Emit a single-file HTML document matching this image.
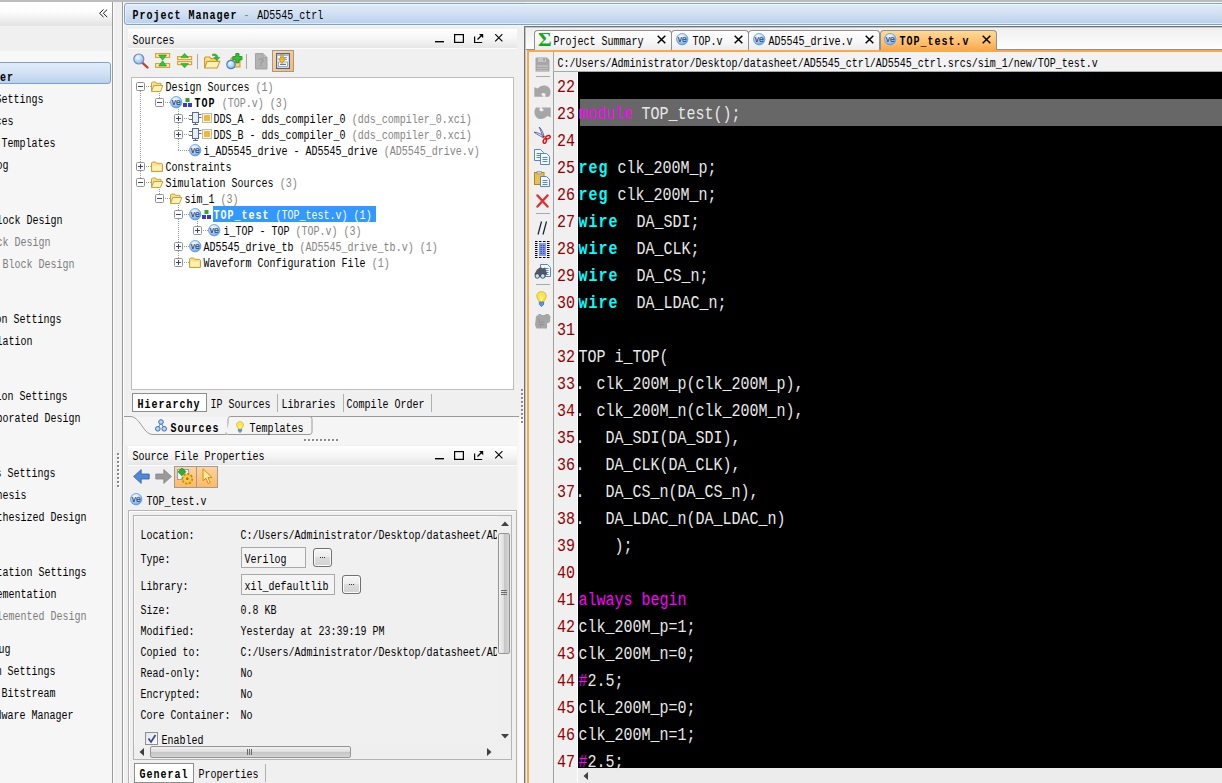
<!DOCTYPE html>
<html><head><meta charset="utf-8"><title>Project Manager - AD5545_ctrl</title>
<style>
html,body{margin:0;padding:0;background:#f0f0f0;}
#r{position:relative;width:1222px;height:783px;overflow:hidden;background:#f0f0f0;font-family:"Liberation Mono",monospace;}
.a{position:absolute;box-sizing:border-box;}
.t{position:absolute;font:10px/12px "Liberation Mono",monospace;white-space:pre;color:#000;transform:scaleY(1.2);transform-origin:0 0;height:10px;line-height:10px;}
.b,.t.b{font-weight:bold;letter-spacing:1px;}
.g{color:#858585;}
.c{position:absolute;left:578.5px;font:15px/15px "Liberation Mono",monospace;white-space:pre;color:#e9e9e9;transform:scaleY(1.2);transform-origin:0 0;height:15px;}
.n{position:absolute;left:557px;font:15px/15px "Liberation Mono",monospace;white-space:pre;color:#960000;transform:scaleY(1.2);transform-origin:0 0;height:15px;}
.k{color:#ff00ff;}
.y{color:#00ffff;font-weight:bold;letter-spacing:1px;}
</style></head><body><div id="r">
<div class="a" style="left:0px;top:0px;width:1222px;height:2px;background:#bcbcbc;"></div>
<div class="a" style="left:0px;top:2px;width:1222px;height:1px;background:#fafafa;"></div>
<div class="a" style="left:0px;top:2px;width:113px;height:781px;background:#f6f6f6;border-right:1px solid #9a9a9a;"></div>
<div class="a" style="left:0px;top:2px;width:112px;height:24px;background:linear-gradient(#ffffff,#fdfdfd 40%,#e2e2e2);"></div>
<div class="a" style="left:0px;top:26px;width:112px;height:25px;background:#f0f0f0;"></div>
<div class="a" style="left:0px;top:51px;width:112px;height:11px;background:#f8f8f8;"></div>
<svg class="a" style="left:99px;top:9px" width="9" height="9" viewBox="0 0 9 9"><path d="M4.500 0.500L0.600 4.300l3.900 3.800M8.200 0.500L4.300 4.300l3.900 3.800" stroke="#1a1a1a" stroke-width="1" fill="none"/></svg>
<div class="a" style="left:-4px;top:62px;width:115px;height:22px;border:1px solid #7da2ce;border-radius:3px;background:linear-gradient(#e1ecf9,#d2e1f4 50%,#b9d1ed);"></div>
<div class="t b" style="right:1207.9px;top:72.6px;">Project Manager</div>
<div class="t" style="right:1178.4px;top:94.6px;">Project Settings</div>
<div class="t" style="right:1208.4px;top:116.6px;">Add Sources</div>
<div class="t" style="right:1166.4px;top:138.6px;">Language Templates</div>
<div class="t" style="right:1213.4px;top:160.6px;">IP Catalog</div>
<div class="t" style="right:1159.4px;top:215.6px;">Create Block Design</div>
<div class="t" style="right:1171.4px;top:237.6px;color:#7c7c7c;">Open Block Design</div>
<div class="t" style="right:1147.4px;top:259.6px;color:#7c7c7c;">Generate Block Design</div>
<div class="t" style="right:1160.4px;top:314.6px;">Simulation Settings</div>
<div class="t" style="right:1189.4px;top:336.6px;">Run Simulation</div>
<div class="t" style="right:1154.4px;top:391.6px;">Elaboration Settings</div>
<div class="t" style="right:1141.4px;top:413.6px;">Open Elaborated Design</div>
<div class="t" style="right:1166.4px;top:468.6px;">Synthesis Settings</div>
<div class="t" style="right:1195.4px;top:490.6px;">Run Synthesis</div>
<div class="t" style="right:1135.4px;top:512.6px;">Open Synthesized Design</div>
<div class="t" style="right:1135.4px;top:567.6px;">Implementation Settings</div>
<div class="t" style="right:1165.4px;top:589.6px;">Run Implementation</div>
<div class="t" style="right:1135.4px;top:611.6px;color:#7c7c7c;">Open Implemented Design</div>
<div class="t" style="right:1211.4px;top:644.6px;">Program and Debug</div>
<div class="t" style="right:1166.4px;top:666.6px;">Bitstream Settings</div>
<div class="t" style="right:1166.4px;top:688.6px;">Generate Bitstream</div>
<div class="t" style="right:1148.4px;top:710.6px;">Open Hardware Manager</div>
<div class="a" style="left:113px;top:2px;width:9px;height:781px;background:#f0f0f0;border-left:1px solid #fff;"></div>
<div class="a" style="left:122px;top:2px;width:1px;height:781px;background:#9a9a9a;"></div>
<div class="a" style="left:123px;top:2px;width:402px;height:781px;background:#f0f0f0;border-left:1px solid #fff;"></div>
<div class="a" style="left:124px;top:3px;width:1110px;height:22px;border:1px solid #7da2ce;border-radius:3px;background:linear-gradient(#e1ebf8,#d0e0f3 50%,#b9d0ec);box-shadow:0 1px 0 #f6f9fc,inset 0 0 0 1px rgba(255,255,255,0.55);"></div>
<div class="t" style="left:132.6px;top:10.6px;"><span class="b">Project Manager</span><span class="g"> - </span><span style="margin-left:1.5px">AD5545_ctrl</span></div>
<div class="a" style="left:128px;top:29px;width:389px;height:20px;background:linear-gradient(#ffffff,#f6f6f6 50%,#e6e6e6);border-bottom:1px solid #fcfcfc;"></div>
<div class="t" style="left:132.6px;top:35.6px;">Sources</div>
<svg class="a" style="left:435px;top:34px" width="70" height="10" viewBox="0 0 70 10"><path d="M0 7.700h9" stroke="#000" stroke-width="1.400" fill="none"/><rect x="19.600" y="0.600" width="8.800" height="7.800" stroke="#000" stroke-width="1.200" fill="none"/><path d="M39.600 2.500v6h7.600" stroke="#000" stroke-width="1.200" fill="none"/><path d="M42.500 5.500L46.500 1.500" stroke="#000" stroke-width="1.200"/><path d="M43.800 -0.200h4.400v4.400z" fill="#000"/><path d="M60.200 0.200l7.200 7.200M67.400 0.200l-7.200 7.200" stroke="#000" stroke-width="1.150" fill="none"/></svg>
<div class="a" style="left:131px;top:77px;width:383px;height:313px;background:#fff;border:1px solid #bdbdbd;"></div>
<div class="a" style="left:140px;top:91px;width:1px;height:91px;background-image:linear-gradient(#9a9a9a 50%,transparent 50%);background-size:1px 2px;"></div>
<div class="a" style="left:159px;top:91px;width:1px;height:7px;background-image:linear-gradient(#9a9a9a 50%,transparent 50%);background-size:1px 2px;"></div>
<div class="a" style="left:178px;top:107px;width:1px;height:43px;background-image:linear-gradient(#9a9a9a 50%,transparent 50%);background-size:1px 2px;"></div>
<div class="a" style="left:159px;top:187px;width:1px;height:7px;background-image:linear-gradient(#9a9a9a 50%,transparent 50%);background-size:1px 2px;"></div>
<div class="a" style="left:178px;top:203px;width:1px;height:59px;background-image:linear-gradient(#9a9a9a 50%,transparent 50%);background-size:1px 2px;"></div>
<div class="a" style="left:197px;top:219px;width:1px;height:7px;background-image:linear-gradient(#9a9a9a 50%,transparent 50%);background-size:1px 2px;"></div>
<div class="a" style="left:146px;top:86px;width:5px;height:1px;background-image:linear-gradient(90deg,#9a9a9a 50%,transparent 50%);background-size:2px 1px;"></div>
<div class="a" style="left:165px;top:102px;width:5px;height:1px;background-image:linear-gradient(90deg,#9a9a9a 50%,transparent 50%);background-size:2px 1px;"></div>
<div class="a" style="left:184px;top:118px;width:5px;height:1px;background-image:linear-gradient(90deg,#9a9a9a 50%,transparent 50%);background-size:2px 1px;"></div>
<div class="a" style="left:184px;top:134px;width:5px;height:1px;background-image:linear-gradient(90deg,#9a9a9a 50%,transparent 50%);background-size:2px 1px;"></div>
<div class="a" style="left:178px;top:150px;width:11px;height:1px;background-image:linear-gradient(90deg,#9a9a9a 50%,transparent 50%);background-size:2px 1px;"></div>
<div class="a" style="left:146px;top:166px;width:5px;height:1px;background-image:linear-gradient(90deg,#9a9a9a 50%,transparent 50%);background-size:2px 1px;"></div>
<div class="a" style="left:146px;top:182px;width:5px;height:1px;background-image:linear-gradient(90deg,#9a9a9a 50%,transparent 50%);background-size:2px 1px;"></div>
<div class="a" style="left:165px;top:198px;width:5px;height:1px;background-image:linear-gradient(90deg,#9a9a9a 50%,transparent 50%);background-size:2px 1px;"></div>
<div class="a" style="left:184px;top:214px;width:5px;height:1px;background-image:linear-gradient(90deg,#9a9a9a 50%,transparent 50%);background-size:2px 1px;"></div>
<div class="a" style="left:203px;top:230px;width:5px;height:1px;background-image:linear-gradient(90deg,#9a9a9a 50%,transparent 50%);background-size:2px 1px;"></div>
<div class="a" style="left:184px;top:246px;width:5px;height:1px;background-image:linear-gradient(90deg,#9a9a9a 50%,transparent 50%);background-size:2px 1px;"></div>
<div class="a" style="left:184px;top:262px;width:5px;height:1px;background-image:linear-gradient(90deg,#9a9a9a 50%,transparent 50%);background-size:2px 1px;"></div>
<svg class="a" style="left:136px;top:82px" width="9" height="9" viewBox="0 0 9 9"><rect x="0.5" y="0.5" width="8" height="8" rx="1" fill="#fff" stroke="#919191"/><path d="M2 4.5h5" stroke="#2b4a8c" stroke-width="1"/></svg>
<svg class="a" style="left:151px;top:81px" width="12.5" height="11" viewBox="0 0 12.500 11"><path d="M0.500 10V2l1-1h3l1 1.300h4.500v2.200" fill="#f7e08c" stroke="#c9a03a"/><path d="M0.500 10.500l2.300-6h9l-2.300 6z" fill="#fdf3b8" stroke="#c9a03a"/></svg>
<div class="t" style="left:165.6px;top:82.6px;">Design Sources <span class="g">(1)</span></div>
<svg class="a" style="left:155px;top:98px" width="9" height="9" viewBox="0 0 9 9"><rect x="0.5" y="0.5" width="8" height="8" rx="1" fill="#fff" stroke="#919191"/><path d="M2 4.5h5" stroke="#2b4a8c" stroke-width="1"/></svg>
<svg class="a" style="left:170px;top:96px" width="12.5" height="12.5" viewBox="0 0 12.500 12.500"><defs><radialGradient id="vg" cx="0.420" cy="0.300" r="0.750"><stop offset="0" stop-color="#ffffff"/><stop offset="0.500" stop-color="#b9d9fa"/><stop offset="1" stop-color="#4f96e8"/></radialGradient></defs><circle cx="6.200" cy="6.200" r="5.700" fill="url(#vg)" stroke="#5c9ae2" stroke-width="0.800"/><text x="6.200" y="8.800" font-family="Liberation Sans,sans-serif" font-size="8.200" text-anchor="middle" fill="#253f78" stroke="#253f78" stroke-width="0.200" textLength="9" lengthAdjust="spacingAndGlyphs">ve</text></svg>
<svg class="a" style="left:183px;top:98px" width="9" height="9" viewBox="0 0 9 9"><rect x="2.5" y="0" width="4" height="4" fill="#2ea52e"/><rect x="0" y="5" width="4" height="4" fill="#3a3ad0"/><rect x="5" y="5" width="4" height="4" fill="#3a3ad0"/></svg>
<div class="t" style="left:194.6px;top:98.6px;"><span class="b">TOP</span> <span class="g">(TOP.v) (3)</span></div>
<svg class="a" style="left:174px;top:114px" width="9" height="9" viewBox="0 0 9 9"><rect x="0.5" y="0.5" width="8" height="8" rx="1" fill="#fff" stroke="#919191"/><path d="M2 4.5h5" stroke="#2b4a8c" stroke-width="1"/><path d="M4.5 2v5" stroke="#2b4a8c" stroke-width="1"/></svg>
<svg class="a" style="left:189px;top:112px" width="13" height="13" viewBox="0 0 13 13"><rect x="3.5" y="0.5" width="6" height="10" fill="#e8eef8" stroke="#606a80"/><path d="M0 3.5h3.5M0 7.5h3.5M9.5 2.5h3M9.5 5.5h3M6.5 10.5v2.5M4 12.5h5" stroke="#606a80" fill="none"/></svg>
<svg class="a" style="left:202px;top:113px" width="10" height="10" viewBox="0 0 10 10"><rect x="0.5" y="0.5" width="9" height="9" fill="#fff6d8" stroke="#b9b9b9"/><rect x="2" y="2" width="6" height="6" fill="#f4b731"/></svg>
<div class="t" style="left:213.6px;top:114.6px;">DDS_A - dds_compiler_0 <span class="g">(dds_compiler_0.xci)</span></div>
<svg class="a" style="left:174px;top:130px" width="9" height="9" viewBox="0 0 9 9"><rect x="0.5" y="0.5" width="8" height="8" rx="1" fill="#fff" stroke="#919191"/><path d="M2 4.5h5" stroke="#2b4a8c" stroke-width="1"/><path d="M4.5 2v5" stroke="#2b4a8c" stroke-width="1"/></svg>
<svg class="a" style="left:189px;top:128px" width="13" height="13" viewBox="0 0 13 13"><rect x="3.5" y="0.5" width="6" height="10" fill="#e8eef8" stroke="#606a80"/><path d="M0 3.5h3.5M0 7.5h3.5M9.5 2.5h3M9.5 5.5h3M6.5 10.5v2.5M4 12.5h5" stroke="#606a80" fill="none"/></svg>
<svg class="a" style="left:202px;top:129px" width="10" height="10" viewBox="0 0 10 10"><rect x="0.5" y="0.5" width="9" height="9" fill="#fff6d8" stroke="#b9b9b9"/><rect x="2" y="2" width="6" height="6" fill="#f4b731"/></svg>
<div class="t" style="left:213.6px;top:130.6px;">DDS_B - dds_compiler_0 <span class="g">(dds_compiler_0.xci)</span></div>
<svg class="a" style="left:189px;top:144px" width="12.5" height="12.5" viewBox="0 0 12.500 12.500"><defs><radialGradient id="vg" cx="0.420" cy="0.300" r="0.750"><stop offset="0" stop-color="#ffffff"/><stop offset="0.500" stop-color="#b9d9fa"/><stop offset="1" stop-color="#4f96e8"/></radialGradient></defs><circle cx="6.200" cy="6.200" r="5.700" fill="url(#vg)" stroke="#5c9ae2" stroke-width="0.800"/><text x="6.200" y="8.800" font-family="Liberation Sans,sans-serif" font-size="8.200" text-anchor="middle" fill="#253f78" stroke="#253f78" stroke-width="0.200" textLength="9" lengthAdjust="spacingAndGlyphs">ve</text></svg>
<div class="t" style="left:203.6px;top:146.6px;">i_AD5545_drive - AD5545_drive <span class="g">(AD5545_drive.v)</span></div>
<svg class="a" style="left:136px;top:162px" width="9" height="9" viewBox="0 0 9 9"><rect x="0.5" y="0.5" width="8" height="8" rx="1" fill="#fff" stroke="#919191"/><path d="M2 4.5h5" stroke="#2b4a8c" stroke-width="1"/><path d="M4.5 2v5" stroke="#2b4a8c" stroke-width="1"/></svg>
<svg class="a" style="left:151px;top:161px" width="12.5" height="11" viewBox="0 0 12.500 11"><path d="M0.500 10.500V2l1-1h3.200l1 1.300h4.800l1 1v7.200z" fill="#f9de84" stroke="#c9a03a"/><path d="M1.500 4.500h9v5h-9z" fill="#fdf1b0"/></svg>
<div class="t" style="left:165.6px;top:162.6px;">Constraints</div>
<svg class="a" style="left:136px;top:178px" width="9" height="9" viewBox="0 0 9 9"><rect x="0.5" y="0.5" width="8" height="8" rx="1" fill="#fff" stroke="#919191"/><path d="M2 4.5h5" stroke="#2b4a8c" stroke-width="1"/></svg>
<svg class="a" style="left:151px;top:177px" width="12.5" height="11" viewBox="0 0 12.500 11"><path d="M0.500 10V2l1-1h3l1 1.300h4.500v2.200" fill="#f7e08c" stroke="#c9a03a"/><path d="M0.500 10.500l2.300-6h9l-2.300 6z" fill="#fdf3b8" stroke="#c9a03a"/></svg>
<div class="t" style="left:165.6px;top:178.6px;">Simulation Sources <span class="g">(3)</span></div>
<svg class="a" style="left:155px;top:194px" width="9" height="9" viewBox="0 0 9 9"><rect x="0.5" y="0.5" width="8" height="8" rx="1" fill="#fff" stroke="#919191"/><path d="M2 4.5h5" stroke="#2b4a8c" stroke-width="1"/></svg>
<svg class="a" style="left:170px;top:193px" width="12.5" height="11" viewBox="0 0 12.500 11"><path d="M0.500 10V2l1-1h3l1 1.300h4.500v2.200" fill="#f7e08c" stroke="#c9a03a"/><path d="M0.500 10.500l2.300-6h9l-2.300 6z" fill="#fdf3b8" stroke="#c9a03a"/></svg>
<div class="t" style="left:184.6px;top:194.6px;">sim_1 <span class="g">(3)</span></div>
<svg class="a" style="left:174px;top:210px" width="9" height="9" viewBox="0 0 9 9"><rect x="0.5" y="0.5" width="8" height="8" rx="1" fill="#fff" stroke="#919191"/><path d="M2 4.5h5" stroke="#2b4a8c" stroke-width="1"/></svg>
<svg class="a" style="left:189px;top:208px" width="12.5" height="12.5" viewBox="0 0 12.500 12.500"><defs><radialGradient id="vg" cx="0.420" cy="0.300" r="0.750"><stop offset="0" stop-color="#ffffff"/><stop offset="0.500" stop-color="#b9d9fa"/><stop offset="1" stop-color="#4f96e8"/></radialGradient></defs><circle cx="6.200" cy="6.200" r="5.700" fill="url(#vg)" stroke="#5c9ae2" stroke-width="0.800"/><text x="6.200" y="8.800" font-family="Liberation Sans,sans-serif" font-size="8.200" text-anchor="middle" fill="#253f78" stroke="#253f78" stroke-width="0.200" textLength="9" lengthAdjust="spacingAndGlyphs">ve</text></svg>
<svg class="a" style="left:202px;top:210px" width="9" height="9" viewBox="0 0 9 9"><rect x="2.5" y="0" width="4" height="4" fill="#2ea52e"/><rect x="0" y="5" width="4" height="4" fill="#3a3ad0"/><rect x="5" y="5" width="4" height="4" fill="#3a3ad0"/></svg>
<div class="a" style="left:213px;top:206px;width:163px;height:16px;background:#3399ff;"></div>
<div class="t" style="left:213.6px;top:210.6px;color:#fff;"><span class="b">TOP_test</span> (TOP_test.v) (1)</div>
<svg class="a" style="left:193px;top:226px" width="9" height="9" viewBox="0 0 9 9"><rect x="0.5" y="0.5" width="8" height="8" rx="1" fill="#fff" stroke="#919191"/><path d="M2 4.5h5" stroke="#2b4a8c" stroke-width="1"/><path d="M4.5 2v5" stroke="#2b4a8c" stroke-width="1"/></svg>
<svg class="a" style="left:208px;top:224px" width="12.5" height="12.5" viewBox="0 0 12.500 12.500"><defs><radialGradient id="vg" cx="0.420" cy="0.300" r="0.750"><stop offset="0" stop-color="#ffffff"/><stop offset="0.500" stop-color="#b9d9fa"/><stop offset="1" stop-color="#4f96e8"/></radialGradient></defs><circle cx="6.200" cy="6.200" r="5.700" fill="url(#vg)" stroke="#5c9ae2" stroke-width="0.800"/><text x="6.200" y="8.800" font-family="Liberation Sans,sans-serif" font-size="8.200" text-anchor="middle" fill="#253f78" stroke="#253f78" stroke-width="0.200" textLength="9" lengthAdjust="spacingAndGlyphs">ve</text></svg>
<div class="t" style="left:223.6px;top:226.6px;">i_TOP - TOP <span class="g">(TOP.v) (3)</span></div>
<svg class="a" style="left:174px;top:242px" width="9" height="9" viewBox="0 0 9 9"><rect x="0.5" y="0.5" width="8" height="8" rx="1" fill="#fff" stroke="#919191"/><path d="M2 4.5h5" stroke="#2b4a8c" stroke-width="1"/><path d="M4.5 2v5" stroke="#2b4a8c" stroke-width="1"/></svg>
<svg class="a" style="left:189px;top:240px" width="12.5" height="12.5" viewBox="0 0 12.500 12.500"><defs><radialGradient id="vg" cx="0.420" cy="0.300" r="0.750"><stop offset="0" stop-color="#ffffff"/><stop offset="0.500" stop-color="#b9d9fa"/><stop offset="1" stop-color="#4f96e8"/></radialGradient></defs><circle cx="6.200" cy="6.200" r="5.700" fill="url(#vg)" stroke="#5c9ae2" stroke-width="0.800"/><text x="6.200" y="8.800" font-family="Liberation Sans,sans-serif" font-size="8.200" text-anchor="middle" fill="#253f78" stroke="#253f78" stroke-width="0.200" textLength="9" lengthAdjust="spacingAndGlyphs">ve</text></svg>
<div class="t" style="left:203.6px;top:242.6px;">AD5545_drive_tb <span class="g">(AD5545_drive_tb.v) (1)</span></div>
<svg class="a" style="left:174px;top:258px" width="9" height="9" viewBox="0 0 9 9"><rect x="0.5" y="0.5" width="8" height="8" rx="1" fill="#fff" stroke="#919191"/><path d="M2 4.5h5" stroke="#2b4a8c" stroke-width="1"/><path d="M4.5 2v5" stroke="#2b4a8c" stroke-width="1"/></svg>
<svg class="a" style="left:189px;top:257px" width="12.5" height="11" viewBox="0 0 12.500 11"><path d="M0.500 10.500V2l1-1h3.200l1 1.300h4.800l1 1v7.200z" fill="#f9de84" stroke="#c9a03a"/><path d="M1.500 4.500h9v5h-9z" fill="#fdf1b0"/></svg>
<div class="t" style="left:203.6px;top:258.6px;">Waveform Configuration File <span class="g">(1)</span></div>
<svg class="a" style="left:133px;top:53px" width="16" height="17" viewBox="0 0 16 17"><defs><radialGradient id="mg" cx="0.400" cy="0.350" r="0.700"><stop offset="0" stop-color="#f4fbff"/><stop offset="1" stop-color="#72b8f4"/></radialGradient></defs><path d="M9.500 9.800l5 4.700" stroke="#c8402a" stroke-width="2.300" stroke-linecap="round"/><circle cx="5.800" cy="6" r="5" fill="url(#mg)" stroke="#7a86c0" stroke-width="1.200"/></svg>
<svg class="a" style="left:155px;top:53px" width="16" height="16" viewBox="0 0 16 16"><rect x="0.600" y="0.600" width="14" height="3.800" fill="#fdf0c4" stroke="#dfa238" stroke-width="1.200"/><rect x="0.600" y="10.600" width="14" height="3.800" fill="#fdf0c4" stroke="#dfa238" stroke-width="1.200"/><path d="M3.600 2h8L7.600 7.200z" fill="#35c535" stroke="#1d951d" stroke-width="0.600"/><path d="M3.600 13h8L7.600 7.800z" fill="#35c535" stroke="#1d951d" stroke-width="0.600"/></svg>
<svg class="a" style="left:177px;top:53px" width="16" height="16" viewBox="0 0 16 16"><rect x="0.600" y="3.600" width="14" height="3" fill="#fdf0c4" stroke="#dfa238" stroke-width="1.200"/><rect x="0.600" y="8.600" width="14" height="3" fill="#fdf0c4" stroke="#dfa238" stroke-width="1.200"/><path d="M3.800 4.600h7.600L7.600 0.400z" fill="#35c535" stroke="#1d951d" stroke-width="0.600"/><path d="M3.800 10.600h7.600L7.600 14.800z" fill="#35c535" stroke="#1d951d" stroke-width="0.600"/></svg>
<div class="a" style="left:197px;top:54px;width:1px;height:15px;background:#a8a8a8;"></div>
<svg class="a" style="left:204px;top:53px" width="17" height="16" viewBox="0 0 17 16"><path d="M0.6 15V5l1-1h4l1.2 1.6h6.2v2.6" fill="#f8e08a" stroke="#c9992a" stroke-width="1.1"/><path d="M0.6 15l2.6-6.6h12.6L13.2 15z" fill="#fdf2b4" stroke="#c9992a" stroke-width="1.1"/><path d="M8.5 1.2c3-.9 5.2.4 5.5 3.2h1.9l-3 3.2-3-3.2h1.9c-.2-1.5-1.4-2.3-3.3-1.6z" fill="#2fbf2f" stroke="#1d8e1d" stroke-width="0.5"/></svg>
<svg class="a" style="left:226px;top:53px" width="17" height="17" viewBox="0 0 17 17"><rect x="5" y="5" width="9" height="9" fill="#f6d878" stroke="#c9992a"/><circle cx="5" cy="11.5" r="4.2" fill="url(#mg)" stroke="#4a7cc8" stroke-width="1.2"/><path d="M9.8 0.6h3.2v3h3v3.2h-3v3h-3.2v-3h-3V3.6h3z" fill="#35c235" stroke="#168416" stroke-width="0.8"/></svg>
<div class="a" style="left:246px;top:54px;width:1px;height:15px;background:#a8a8a8;"></div>
<svg class="a" style="left:255px;top:53px" width="13" height="17" viewBox="0 0 13 17"><path d="M0.500 0.500h7.500l4 4v11.500H0.500z" fill="#b2b2b2" stroke="#a2a2a2"/><path d="M8 0.500v4h4" fill="#bcbcbc" stroke="#a2a2a2"/><text x="6" y="13" font-family="Liberation Sans,sans-serif" font-size="10" font-weight="bold" text-anchor="middle" fill="#9c9c9c">?</text></svg>
<div class="a" style="left:272px;top:50px;width:22px;height:22px;background:linear-gradient(135deg,#ffd596,#ffb75f);border:1px solid #9a9a9a;"></div>
<svg class="a" style="left:276px;top:53px" width="14" height="16" viewBox="0 0 14 16"><rect x="0.600" y="0.600" width="12.800" height="14.800" fill="#eefaff" stroke="#4a62a8" stroke-width="1.200"/><rect x="1.200" y="1.200" width="11.600" height="1.800" fill="#8cc0ea"/><rect x="2.500" y="9" width="9" height="4.500" fill="#fff" stroke="#8a96a8" stroke-width="0.800"/><path d="M4 11.300h6" stroke="#3a5aa0" stroke-width="1"/><path d="M4 4.500h7M4 6.500h7" stroke="#6a8ac8" stroke-width="0.800"/><path d="M4.800 1.200h2.400v4.600h2.400L6 10.400 2.400 5.800h2.400z" fill="#f6bc22" stroke="#c08a08" stroke-width="0.700"/></svg>
<div class="a" style="left:132px;top:393px;width:75px;height:19px;background:#fff;border:1px solid #8e8e8e;"></div>
<div class="t b" style="left:137.6px;top:399.6px;">Hierarchy</div>
<div class="t" style="left:210.6px;top:399.6px;">IP Sources</div>
<div class="a" style="left:277px;top:394px;width:1px;height:18px;background:#b0b0b0;"></div>
<div class="t" style="left:281.6px;top:399.6px;">Libraries</div>
<div class="a" style="left:343px;top:394px;width:1px;height:18px;background:#b0b0b0;"></div>
<div class="t" style="left:346.6px;top:399.6px;">Compile Order</div>
<div class="a" style="left:431px;top:394px;width:1px;height:18px;background:#b0b0b0;"></div>
<div class="a" style="left:123px;top:417px;width:401px;height:28px;background:#f5f5f5;"></div>
<div class="a" style="left:517px;top:417px;width:7px;height:366px;background:linear-gradient(90deg,#f4f4f4,#fcfcfc 50%,#f6f6f6);"></div>
<svg class="a" style="left:124px;top:414px" width="400" height="24" viewBox="0 0 400 24"><path d="M0 2.5h6c5 0 8 4 11 8s6 10 12 10h72c3 0 3-2 3-4V5.500c0-2 1-3 3-3h288" fill="none" stroke="#9a9a9a"/><path d="M102 18.500c0 1.500 1 2 3 2h80c2 0 3-1 3-3V5.500c0-2-1-3-3-3h-78" fill="#f4f4f4" stroke="#9a9a9a"/></svg>
<svg class="a" style="left:155px;top:419px" width="12" height="13" viewBox="0 0 12 13"><path d="M6 3.500L2.800 9.500M6 3.500l3.200 6" stroke="#4a7ac0" stroke-width="0.9"/><circle cx="6" cy="3" r="2.300" fill="#b8d6fa" stroke="#3a6ab8"/><circle cx="2.800" cy="9.800" r="2.300" fill="#b8d6fa" stroke="#3a6ab8"/><circle cx="9.200" cy="9.800" r="2.300" fill="#b8d6fa" stroke="#3a6ab8"/></svg>
<div class="t b" style="left:170.6px;top:423.6px;">Sources</div>
<svg class="a" style="left:236px;top:420.5px" width="8" height="12" viewBox="0 0 10 15"><path d="M5 0.6c2.600 0 4.400 1.800 4.400 4.200 0 2.400-2 3.400-2.200 5.400H2.800C2.600 8.200 0.600 7.200 0.600 4.800 0.600 2.400 2.400 0.600 5 0.600z" fill="#fbe54a" stroke="#d8b020" stroke-width="0.800"/><path d="M3 10.500h4v2.200L5 14.500 3 12.700z" fill="#5a9be8" stroke="#2a68c0" stroke-width="0.700"/><path d="M4 5l1 4.500L6 5" stroke="#fff8c0" stroke-width="0.700" fill="none"/></svg>
<div class="t" style="left:249.6px;top:423.6px;">Templates</div>
<div class="a" style="left:305px;top:440px;width:34px;height:2px;background-image:linear-gradient(90deg,#ffffff 50%,transparent 50%);background-size:4px 2px;"></div>
<div class="a" style="left:304px;top:439px;width:34px;height:2px;background-image:linear-gradient(90deg,#8a8a8a 50%,transparent 50%);background-size:4px 2px;"></div>
<div class="a" style="left:522px;top:390px;width:2px;height:34px;background-image:linear-gradient(#ffffff 50%,transparent 50%);background-size:2px 4px;"></div>
<div class="a" style="left:521px;top:389px;width:2px;height:34px;background-image:linear-gradient(#8a8a8a 50%,transparent 50%);background-size:2px 4px;"></div>
<div class="a" style="left:118px;top:454px;width:2px;height:34px;background-image:linear-gradient(#ffffff 50%,transparent 50%);background-size:2px 4px;"></div>
<div class="a" style="left:117px;top:453px;width:2px;height:34px;background-image:linear-gradient(#8a8a8a 50%,transparent 50%);background-size:2px 4px;"></div>
<div class="a" style="left:128px;top:446px;width:389px;height:20px;background:linear-gradient(#ffffff,#f6f6f6 50%,#e6e6e6);border-bottom:1px solid #fcfcfc;"></div>
<div class="t" style="left:132.6px;top:451.6px;">Source File Properties</div>
<svg class="a" style="left:435px;top:451px" width="70" height="10" viewBox="0 0 70 10"><path d="M0 7.700h9" stroke="#000" stroke-width="1.400" fill="none"/><rect x="19.600" y="0.600" width="8.800" height="7.800" stroke="#000" stroke-width="1.200" fill="none"/><path d="M39.600 2.500v6h7.600" stroke="#000" stroke-width="1.200" fill="none"/><path d="M42.500 5.500L46.500 1.500" stroke="#000" stroke-width="1.200"/><path d="M43.800 -0.200h4.400v4.400z" fill="#000"/><path d="M60.200 0.200l7.200 7.200M67.400 0.200l-7.200 7.200" stroke="#000" stroke-width="1.150" fill="none"/></svg>
<svg class="a" style="left:133px;top:469px" width="17" height="15" viewBox="0 0 17 15"><path d="M0.600 7.500L8.200 0.600v4.400h8v5H8.200v4.400z" fill="#4f88d6" stroke="#2f62b0" stroke-width="0.800"/></svg>
<svg class="a" style="left:155px;top:469px" width="17" height="15" viewBox="0 0 17 15"><path d="M16.400 7.500L8.800 0.600v4.400h-8v5h8v4.400z" fill="#9a9a9a" stroke="#858585" stroke-width="0.800"/></svg>
<div class="a" style="left:174px;top:466px;width:23px;height:22px;background:linear-gradient(#ffd29c,#ffb964);border:1px solid #9c9c9c;"></div>
<div class="a" style="left:196px;top:466px;width:22px;height:22px;background:linear-gradient(#ffd29c,#ffb964);border:1px solid #9c9c9c;"></div>
<svg class="a" style="left:177px;top:468px" width="17" height="17" viewBox="0 0 17 17"><rect x="0.500" y="1.500" width="11" height="10" fill="#eef3fb" stroke="#8aa0c8"/><rect x="2.200" y="1" width="5.600" height="5.600" transform="rotate(45 5 3.800)" fill="#28b428" stroke="#107810" stroke-width="0.600"/><circle cx="10.300" cy="10.800" r="5" fill="#f2bc34" stroke="#c08a10" stroke-width="1.600" stroke-dasharray="2.200 1.600"/><circle cx="10.300" cy="10.800" r="3.600" fill="#f6c846"/><circle cx="10.300" cy="10.800" r="1.200" fill="#8a6a20"/></svg>
<svg class="a" style="left:202px;top:468px" width="11" height="17" viewBox="0 0 11 17"><path d="M1 0.800v12l3-2.600 2.200 5.400 2-0.900L6 9.500h4z" fill="#ffe89a" stroke="#c08a10" stroke-width="0.900"/></svg>
<svg class="a" style="left:130px;top:493px" width="12.5" height="12.5" viewBox="0 0 12.500 12.500"><defs><radialGradient id="vg" cx="0.420" cy="0.300" r="0.750"><stop offset="0" stop-color="#ffffff"/><stop offset="0.500" stop-color="#b9d9fa"/><stop offset="1" stop-color="#4f96e8"/></radialGradient></defs><circle cx="6.200" cy="6.200" r="5.700" fill="url(#vg)" stroke="#5c9ae2" stroke-width="0.800"/><text x="6.200" y="8.800" font-family="Liberation Sans,sans-serif" font-size="8.200" text-anchor="middle" fill="#253f78" stroke="#253f78" stroke-width="0.200" textLength="9" lengthAdjust="spacingAndGlyphs">ve</text></svg>
<div class="t" style="left:146.6px;top:496.6px;">TOP_test.v</div>
<div class="a" style="left:128px;top:510px;width:389px;height:274px;border:1px solid #b4b4b4;background:#f0f0f0;box-shadow:inset 1px 1px 0 #fff;"></div>
<div class="a" style="left:133px;top:515px;width:379px;height:245px;border:1px solid #b4b4b4;background:#f0f0f0;box-shadow:inset 1px 1px 0 #f9f9f9;"></div>
<div class="a" style="left:134px;top:516px;width:363px;height:229px;overflow:hidden;">
<div class="t" style="left:6.6px;top:14.6px;">Location:</div>
<div class="t" style="left:106.6px;top:14.6px;">C:/Users/Administrator/Desktop/datasheet/AD5545_ctrl</div>
<div class="t" style="left:6.6px;top:39.1px;">Type:</div>
<div class="t" style="left:6.6px;top:66.1px;">Library:</div>
<div class="t" style="left:6.6px;top:90.1px;">Size:</div>
<div class="t" style="left:106.6px;top:90.1px;">0.8 KB</div>
<div class="t" style="left:6.6px;top:111.1px;">Modified:</div>
<div class="t" style="left:106.6px;top:111.1px;">Yesterday at 23:39:19 PM</div>
<div class="t" style="left:6.6px;top:132.1px;">Copied to:</div>
<div class="t" style="left:106.6px;top:132.1px;">C:/Users/Administrator/Desktop/datasheet/AD5545_ctrl</div>
<div class="t" style="left:6.6px;top:153.1px;">Read-only:</div>
<div class="t" style="left:106.6px;top:153.1px;">No</div>
<div class="t" style="left:6.6px;top:174.1px;">Encrypted:</div>
<div class="t" style="left:106.6px;top:174.1px;">No</div>
<div class="t" style="left:6.6px;top:195.1px;">Core Container:</div>
<div class="t" style="left:106.6px;top:195.1px;">No</div>
<div class="t" style="left:27.6px;top:219.6px;">Enabled</div>
<div class="a" style="left:11px;top:216px;width:13px;height:13px;border:1px solid #8e8f8f;background:linear-gradient(135deg,#dfe3e8,#fff);"></div>
<svg class="a" style="left:13px;top:218px" width="10" height="10"><path d="M1.500 4.500l2.500 3.500 4.500-7" stroke="#3a4a9c" stroke-width="1.800" fill="none"/></svg>
</div>
<div class="a" style="left:241px;top:547px;width:65px;height:21px;border:1px solid #a8a8a8;background:#f4f4f4;"></div>
<div class="t" style="left:244.6px;top:555.1px;">Verilog</div>
<div class="a" style="left:241px;top:574px;width:94px;height:21px;border:1px solid #a8a8a8;background:#f4f4f4;"></div>
<div class="t" style="left:244.6px;top:582.1px;">xil_defaultlib</div>
<div class="a" style="left:313px;top:548px;width:19px;height:19px;border:1px solid #707070;border-radius:3px;background:linear-gradient(#f6f6f6,#ececec 45%,#dcdcdc 50%,#d2d2d2);box-shadow:inset 0 0 0 1px #fbfbfb;"></div>
<div class="a" style="left:320px;top:557px;width:5px;height:1px;background-image:linear-gradient(90deg,#303030 50%,transparent 50%);background-size:2px 1px;"></div>
<div class="a" style="left:342px;top:575px;width:19px;height:19px;border:1px solid #707070;border-radius:3px;background:linear-gradient(#f6f6f6,#ececec 45%,#dcdcdc 50%,#d2d2d2);box-shadow:inset 0 0 0 1px #fbfbfb;"></div>
<div class="a" style="left:349px;top:584px;width:5px;height:1px;background-image:linear-gradient(90deg,#303030 50%,transparent 50%);background-size:2px 1px;"></div>
<div class="a" style="left:497px;top:516px;width:14px;height:229px;background:#efefef;"></div>
<svg class="a" style="left:501px;top:521px" width="8" height="5" viewBox="0 0 8 5"><path d="M0 5l4-4.500 4 4.500z" fill="#404040"/></svg>
<svg class="a" style="left:501px;top:734px" width="8" height="5" viewBox="0 0 8 5"><path d="M0 0l4 4.500 4-4.500z" fill="#404040"/></svg>
<div class="a" style="left:498px;top:533px;width:12px;height:121px;border:1px solid #959595;border-radius:2px;background:linear-gradient(90deg,#f2f2f2,#dcdcdc 50%,#c6c6c6 55%,#d4d4d4);"></div>
<div class="a" style="left:501px;top:590px;width:6px;height:5px;background-image:linear-gradient(#6a6a6a 50%,transparent 50%);background-size:6px 2px;"></div>
<div class="a" style="left:134px;top:745px;width:363px;height:14px;background:#efefef;"></div>
<svg class="a" style="left:139px;top:748px" width="5" height="8" viewBox="0 0 5 8"><path d="M5 0L0.500 4 5 8z" fill="#404040"/></svg>
<svg class="a" style="left:487px;top:748px" width="5" height="8" viewBox="0 0 5 8"><path d="M0 0l4.500 4L0 8z" fill="#404040"/></svg>
<div class="a" style="left:150px;top:746px;width:201px;height:12px;border:1px solid #959595;border-radius:2px;background:linear-gradient(#f2f2f2,#dcdcdc 50%,#c6c6c6 55%,#d4d4d4);"></div>
<div class="a" style="left:247px;top:749px;width:5px;height:6px;background-image:linear-gradient(90deg,#6a6a6a 50%,transparent 50%);background-size:2px 6px;"></div>
<div class="a" style="left:134px;top:763px;width:60px;height:20px;background:#fff;border:1px solid #8e8e8e;"></div>
<div class="t b" style="left:139.6px;top:769.6px;">General</div>
<div class="t" style="left:198.6px;top:769.6px;">Properties</div>
<div class="a" style="left:265px;top:764px;width:1px;height:18px;background:#b0b0b0;"></div>
<div class="a" style="left:524px;top:26px;width:700px;height:760px;border:1px solid #727272;background:#f0f0f0;box-shadow:inset 1px 1px 0 #c4c4c4;"></div>
<div class="a" style="left:526px;top:28px;width:696px;height:22px;background:linear-gradient(#efefef,#fefefe);border-bottom:1px solid #8f8f8f;"></div>
<div class="a" style="left:534px;top:30px;width:138px;height:20px;border:1px solid #8e9096;border-bottom:none;border-radius:4px 4px 0 0;background:linear-gradient(#ffffff,#f6f6f6 60%,#ececec);"></div>
<div class="a" style="left:671px;top:30px;width:78px;height:20px;border:1px solid #8e9096;border-bottom:none;border-radius:4px 4px 0 0;background:linear-gradient(#ffffff,#f6f6f6 60%,#ececec);"></div>
<div class="a" style="left:748px;top:30px;width:132px;height:20px;border:1px solid #8e9096;border-bottom:none;border-radius:4px 4px 0 0;background:linear-gradient(#ffffff,#f6f6f6 60%,#ececec);"></div>
<div class="a" style="left:538px;top:29px;font:bold 19px/22px 'Liberation Serif',serif;color:#16a816;transform:scaleX(1.1);transform-origin:0 0;">Σ</div>
<div class="t" style="left:553.6px;top:36.6px;">Project Summary</div>
<svg class="a" style="left:657px;top:35px" width="9" height="9" viewBox="0 0 9 9"><path d="M0.700 0.700l7.600 7.600M8.300 0.700L0.700 8.300" stroke="#000" stroke-width="1.500"/></svg>
<svg class="a" style="left:676px;top:33px" width="12.5" height="12.5" viewBox="0 0 12.500 12.500"><defs><radialGradient id="vg" cx="0.420" cy="0.300" r="0.750"><stop offset="0" stop-color="#ffffff"/><stop offset="0.500" stop-color="#b9d9fa"/><stop offset="1" stop-color="#4f96e8"/></radialGradient></defs><circle cx="6.200" cy="6.200" r="5.700" fill="url(#vg)" stroke="#5c9ae2" stroke-width="0.800"/><text x="6.200" y="8.800" font-family="Liberation Sans,sans-serif" font-size="8.200" text-anchor="middle" fill="#253f78" stroke="#253f78" stroke-width="0.200" textLength="9" lengthAdjust="spacingAndGlyphs">ve</text></svg>
<div class="t" style="left:692.6px;top:36.6px;">TOP.v</div>
<svg class="a" style="left:734px;top:35px" width="9" height="9" viewBox="0 0 9 9"><path d="M0.700 0.700l7.600 7.600M8.300 0.700L0.700 8.300" stroke="#000" stroke-width="1.500"/></svg>
<svg class="a" style="left:753px;top:33px" width="12.5" height="12.5" viewBox="0 0 12.500 12.500"><defs><radialGradient id="vg" cx="0.420" cy="0.300" r="0.750"><stop offset="0" stop-color="#ffffff"/><stop offset="0.500" stop-color="#b9d9fa"/><stop offset="1" stop-color="#4f96e8"/></radialGradient></defs><circle cx="6.200" cy="6.200" r="5.700" fill="url(#vg)" stroke="#5c9ae2" stroke-width="0.800"/><text x="6.200" y="8.800" font-family="Liberation Sans,sans-serif" font-size="8.200" text-anchor="middle" fill="#253f78" stroke="#253f78" stroke-width="0.200" textLength="9" lengthAdjust="spacingAndGlyphs">ve</text></svg>
<div class="t" style="left:768.6px;top:36.6px;">AD5545_drive.v</div>
<svg class="a" style="left:865px;top:35px" width="9" height="9" viewBox="0 0 9 9"><path d="M0.700 0.700l7.600 7.600M8.300 0.700L0.700 8.300" stroke="#000" stroke-width="1.500"/></svg>
<div class="a" style="left:527px;top:50px;width:700px;height:740px;border:2px solid #f8a94e;border-top-width:2px;background:#f0f0f0;"></div>
<div class="a" style="left:880px;top:30px;width:117px;height:20px;border:1px solid #8e9096;border-bottom:none;border-radius:4px 4px 0 0;background:linear-gradient(#ffda92,#ffc375 50%,#fba94b);"></div>
<svg class="a" style="left:884px;top:33px" width="12.5" height="12.5" viewBox="0 0 12.500 12.500"><defs><radialGradient id="vg" cx="0.420" cy="0.300" r="0.750"><stop offset="0" stop-color="#ffffff"/><stop offset="0.500" stop-color="#b9d9fa"/><stop offset="1" stop-color="#4f96e8"/></radialGradient></defs><circle cx="6.200" cy="6.200" r="5.700" fill="url(#vg)" stroke="#5c9ae2" stroke-width="0.800"/><text x="6.200" y="8.800" font-family="Liberation Sans,sans-serif" font-size="8.200" text-anchor="middle" fill="#253f78" stroke="#253f78" stroke-width="0.200" textLength="9" lengthAdjust="spacingAndGlyphs">ve</text></svg>
<div class="t b" style="left:899.6px;top:36.6px;">TOP_test.v</div>
<svg class="a" style="left:982px;top:35px" width="9" height="9" viewBox="0 0 9 9"><path d="M0.700 0.700l7.600 7.600M8.300 0.700L0.700 8.300" stroke="#000" stroke-width="1.500"/></svg>
<div class="a" style="left:553px;top:52px;width:671px;height:20px;border-left:1px solid #a8a8a8;border-bottom:1px solid #a8a8a8;background:#f2f2f2;"></div>
<div class="t" style="left:557.6px;top:58.6px;">C:/Users/Administrator/Desktop/datasheet/AD5545_ctrl/AD5545_ctrl.srcs/sim_1/new/TOP_test.v</div>
<div class="a" style="left:553px;top:72px;width:25px;height:711px;background:#f0f0f0;border-left:1px solid #a0a0a0;border-right:1px solid #fff;"></div>
<div class="a" style="left:578px;top:72px;width:644px;height:696px;background:#000;"></div>
<div class="a" style="left:580px;top:99px;width:642px;height:27px;background:#676767;"></div>
<div class="a" style="left:578px;top:768px;width:644px;height:15px;background:#ececec;"></div>
<svg class="a" style="left:582.5px;top:771.5px" width="5" height="8" viewBox="0 0 5 8"><path d="M5 0L0.500 4 5 8z" fill="#404040"/></svg>
<div class="n" style="top:78.5px">22</div>
<div class="n" style="top:105.5px">23</div>
<div class="c" style="top:105.5px"><span class="k">module</span> TOP_test();</div>
<div class="n" style="top:132.5px">24</div>
<div class="n" style="top:159.5px">25</div>
<div class="c" style="top:159.5px"><span class="y">reg</span> clk_200M_p;</div>
<div class="n" style="top:186.5px">26</div>
<div class="c" style="top:186.5px"><span class="y">reg</span> clk_200M_n;</div>
<div class="n" style="top:213.5px">27</div>
<div class="c" style="top:213.5px"><span class="y">wire</span>  DA_SDI;</div>
<div class="n" style="top:240.5px">28</div>
<div class="c" style="top:240.5px"><span class="y">wire</span>  DA_CLK;</div>
<div class="n" style="top:267.5px">29</div>
<div class="c" style="top:267.5px"><span class="y">wire</span>  DA_CS_n;</div>
<div class="n" style="top:294.5px">30</div>
<div class="c" style="top:294.5px"><span class="y">wire</span>  DA_LDAC_n;</div>
<div class="n" style="top:321.5px">31</div>
<div class="n" style="top:348.5px">32</div>
<div class="c" style="top:348.5px">TOP i_TOP(</div>
<div class="n" style="top:375.5px">33</div>
<div class="c" style="top:375.5px"><span style="position:relative;left:-3px">.</span> clk_200M_p(clk_200M_p),</div>
<div class="n" style="top:402.5px">34</div>
<div class="c" style="top:402.5px"><span style="position:relative;left:-3px">.</span> clk_200M_n(clk_200M_n),</div>
<div class="n" style="top:429.5px">35</div>
<div class="c" style="top:429.5px"><span style="position:relative;left:-3px">.</span>  DA_SDI(DA_SDI),</div>
<div class="n" style="top:456.5px">36</div>
<div class="c" style="top:456.5px"><span style="position:relative;left:-3px">.</span>  DA_CLK(DA_CLK),</div>
<div class="n" style="top:483.5px">37</div>
<div class="c" style="top:483.5px"><span style="position:relative;left:-3px">.</span>  DA_CS_n(DA_CS_n),</div>
<div class="n" style="top:510.5px">38</div>
<div class="c" style="top:510.5px"><span style="position:relative;left:-3px">.</span>  DA_LDAC_n(DA_LDAC_n)</div>
<div class="n" style="top:537.5px">39</div>
<div class="c" style="top:537.5px">    );</div>
<div class="n" style="top:564.5px">40</div>
<div class="n" style="top:591.5px">41</div>
<div class="c" style="top:591.5px"><span class="k">always begin</span></div>
<div class="n" style="top:618.5px">42</div>
<div class="c" style="top:618.5px">clk_200M_p=1;</div>
<div class="n" style="top:645.5px">43</div>
<div class="c" style="top:645.5px">clk_200M_n=0;</div>
<div class="n" style="top:672.5px">44</div>
<div class="c" style="top:672.5px"><span class="k">#</span>2.5;</div>
<div class="n" style="top:699.5px">45</div>
<div class="c" style="top:699.5px">clk_200M_p=0;</div>
<div class="n" style="top:726.5px">46</div>
<div class="c" style="top:726.5px">clk_200M_n=1;</div>
<div class="n" style="top:753.5px">47</div>
<div class="c" style="top:753.5px"><span class="k">#</span>2.5;</div>
<svg class="a" style="left:535px;top:57px" width="15" height="15" viewBox="0 0 15 15"><path d="M0.500 1.500l1-1h10.500l2.500 2.500v11.500H0.500z" fill="#a6a6a6"/><rect x="3" y="0.500" width="8" height="4.500" fill="#c4c4c4"/><rect x="8" y="1" width="2" height="3" fill="#a6a6a6"/><rect x="2" y="8" width="11" height="6.500" fill="#bcbcbc"/><path d="M2 10.500h11M2 12.500h11" stroke="#a6a6a6"/></svg>
<div class="a" style="left:536px;top:76px;width:14px;height:1px;background:#a8a8a8;"></div>
<svg class="a" style="left:534px;top:85px" width="17" height="13" viewBox="0 0 17 13"><path d="M0.300 2.200V11.800H9.600L7.200 9.400C8 8 10 7.600 11 8.600C12 9.600 11.500 11 10.600 11.800H15C17.200 9 17 4.400 14.400 2C11.400 -0.600 6.400 0.200 3.800 3.400Z" fill="#a6a6a6"/></svg>
<svg class="a" style="left:534px;top:107px" width="17" height="13" viewBox="0 0 17 13"><g transform="rotate(180 8.500 6.200)"><path d="M0.300 2.200V11.800H9.600L7.200 9.400C8 8 10 7.600 11 8.600C12 9.600 11.500 11 10.600 11.800H15C17.200 9 17 4.400 14.400 2C11.400 -0.600 6.400 0.200 3.800 3.400Z" fill="#a6a6a6"/></g></svg>
<svg class="a" style="left:533px;top:126px" width="18" height="18" viewBox="0 0 18 18"><path d="M1.200 6.200C4.500 6.300 8.500 8 10.800 10.800L9.600 11.400C7 9.800 4 8.600 1.200 6.200Z" fill="#e8ecf8" stroke="#3a4a9a" stroke-width="0.800"/><path d="M6.200 1C8.800 3.400 10.300 7 11 10.600L9.700 10.800C9 7.600 7.600 4 6.200 1Z" fill="#e8ecf8" stroke="#3a4a9a" stroke-width="0.800"/><ellipse cx="15" cy="11.200" rx="2.300" ry="1.500" fill="none" stroke="#e01010" stroke-width="1.500" transform="rotate(-20 15 11.200)"/><ellipse cx="11.800" cy="15" rx="1.500" ry="2.300" fill="none" stroke="#e01010" stroke-width="1.500" transform="rotate(15 11.800 15)"/><circle cx="10.800" cy="10.800" r="1" fill="#e01010"/></svg>
<svg class="a" style="left:534px;top:149px" width="17" height="17" viewBox="0 0 17 17"><path d="M0.5 0.5h6l3 3v8h-9z" fill="#f4f8ff" stroke="#5a82c8"/><path d="M2.5 4.5h5" stroke="#5a82c8"/><path d="M2.5 6.5h5" stroke="#5a82c8"/><path d="M2.5 8.5h5" stroke="#5a82c8"/><path d="M6.5 4.5h6l3 3v8h-9z" fill="#f4f8ff" stroke="#5a82c8"/><path d="M8.5 8.5h5" stroke="#5a82c8"/><path d="M8.5 10.5h5" stroke="#5a82c8"/><path d="M8.5 12.5h5" stroke="#5a82c8"/></svg>
<svg class="a" style="left:534px;top:171px" width="17" height="17" viewBox="0 0 17 17"><rect x="0.500" y="1.500" width="9.500" height="12" fill="#e8c050" stroke="#b08818"/><rect x="3" y="0.500" width="4.500" height="2.500" fill="#d0d0d0" stroke="#808080" stroke-width="0.600"/><path d="M6.5 5.5h6l3 3v7h-9z" fill="#f4f8ff" stroke="#5a82c8"/><path d="M8.5 9.5h5" stroke="#5a82c8"/><path d="M8.5 11.5h5" stroke="#5a82c8"/><path d="M8.5 13.5h5" stroke="#5a82c8"/></svg>
<svg class="a" style="left:536px;top:194px" width="13" height="14" viewBox="0 0 13 14"><path d="M1.500 1.500l10 11M11.500 1.500l-10 11" stroke="#e03030" stroke-width="2.400" stroke-linecap="round"/></svg>
<div class="a" style="left:536px;top:213px;width:14px;height:1px;background:#a8a8a8;"></div>
<svg class="a" style="left:537px;top:221px" width="11" height="14" viewBox="0 0 11 14"><path d="M4.500 0.500L1 13.500M9.500 0.500L6 13.500" stroke="#1a1a30" stroke-width="1.200"/></svg>
<svg class="a" style="left:535px;top:241px" width="15" height="17" viewBox="0 0 15 17"><path d="M0 0.5h15M0 2.5h15M0 4.5h15M0 6.5h15M0 8.5h15M0 10.5h15M0 12.5h15M0 14.5h15M0 16.5h15" stroke="#000" stroke-width="1" stroke-dasharray="2.500 1.500"/><rect x="4" y="2" width="7" height="13" fill="#7e96ea"/><path d="M5.500 4.500h4M5.500 6.500h4M5.500 8.500h4M5.500 10.500h4M5.500 12.500h4" stroke="#3a4aa8" stroke-dasharray="1.500 1"/></svg>
<svg class="a" style="left:534px;top:264px" width="17" height="16" viewBox="0 0 17 16"><path d="M6.5 0.5h7l3 3v9h-10z" fill="#f4f8ff" stroke="#5a82c8"/><path d="M8.5 4.5h6" stroke="#5a82c8"/><path d="M8.5 6.5h6" stroke="#5a82c8"/><path d="M8.5 8.5h6" stroke="#5a82c8"/><path d="M8.5 10.5h6" stroke="#5a82c8"/><path d="M3 5.500l3.500-2.500 2 1.500 2.500-1 2 6-3 4.500H7.500L6 12 4.500 14H2L0.500 10z" fill="#505868"/><circle cx="3.300" cy="12" r="2.300" fill="#bfe0f0" stroke="#303848" stroke-width="0.800"/><circle cx="8.800" cy="12" r="2.300" fill="#bfe0f0" stroke="#303848" stroke-width="0.800"/></svg>
<div class="a" style="left:536px;top:284px;width:14px;height:1px;background:#a8a8a8;"></div>
<svg class="a" style="left:536px;top:291px" width="11" height="16" viewBox="0 0 10 15"><path d="M5 0.6c2.600 0 4.400 1.800 4.400 4.200 0 2.400-2 3.400-2.200 5.400H2.800C2.600 8.200 0.600 7.200 0.600 4.800 0.600 2.400 2.400 0.600 5 0.600z" fill="#fbe54a" stroke="#d8b020" stroke-width="0.800"/><path d="M3 10.500h4v2.200L5 14.500 3 12.700z" fill="#5a9be8" stroke="#2a68c0" stroke-width="0.700"/><path d="M4 5l1 4.500L6 5" stroke="#fff8c0" stroke-width="0.700" fill="none"/></svg>
<svg class="a" style="left:534px;top:313px" width="17" height="17" viewBox="0 0 17 17"><path d="M2 3.500l3-2.500h2l0.500 1h3.500l0.500-1h3l2 2.500-0.500 5.500-3 1.500v5H2.500L1 12z" fill="#a6a6a6"/><path d="M5 6l1.500 8M7 9h3M7 11.500h3" stroke="#8e8e8e" stroke-width="0.900" fill="none"/></svg>
</div></body></html>
